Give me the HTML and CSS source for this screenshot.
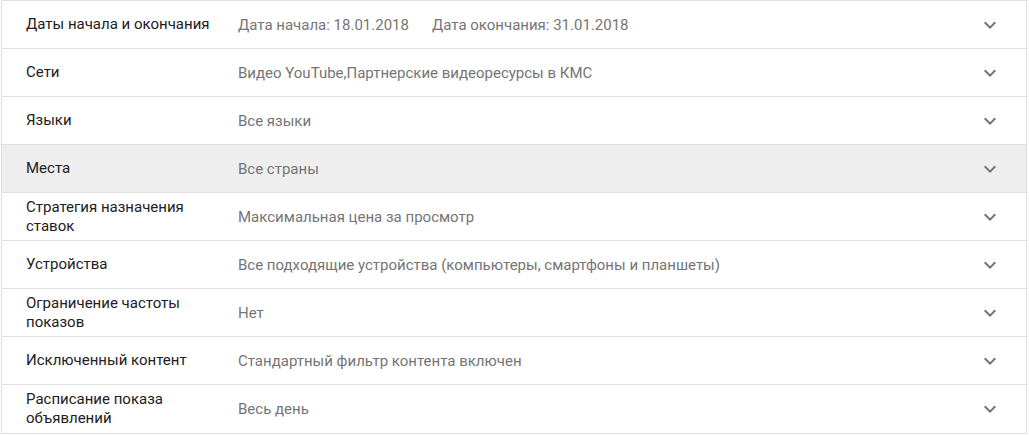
FILE: index.html
```html
<!DOCTYPE html>
<html lang="ru">
<head>
<meta charset="utf-8">
<link rel="stylesheet" href="styles.css">
</head>
<body>
<div class="panel">
  <div class="row">
    <div class="label">Даты начала и окончания</div>
    <div class="value"><span>Дата начала: 18.01.2018</span><span>Дата окончания: 31.01.2018</span></div>
    <svg class="chev" viewBox="0 0 24 24"><path d="M16.59 8.59L12 13.17 7.41 8.59 6 10l6 6 6-6z"/></svg>
  </div>
  <div class="row">
    <div class="label">Сети</div>
    <div class="value">Видео YouTube,Партнерские видеоресурсы в КМС</div>
    <svg class="chev" viewBox="0 0 24 24"><path d="M16.59 8.59L12 13.17 7.41 8.59 6 10l6 6 6-6z"/></svg>
  </div>
  <div class="row">
    <div class="label">Языки</div>
    <div class="value">Все языки</div>
    <svg class="chev" viewBox="0 0 24 24"><path d="M16.59 8.59L12 13.17 7.41 8.59 6 10l6 6 6-6z"/></svg>
  </div>
  <div class="row hover">
    <div class="label">Места</div>
    <div class="value">Все страны</div>
    <svg class="chev" viewBox="0 0 24 24"><path d="M16.59 8.59L12 13.17 7.41 8.59 6 10l6 6 6-6z"/></svg>
  </div>
  <div class="row">
    <div class="label">Стратегия назначения ставок</div>
    <div class="value">Максимальная цена за просмотр</div>
    <svg class="chev" viewBox="0 0 24 24"><path d="M16.59 8.59L12 13.17 7.41 8.59 6 10l6 6 6-6z"/></svg>
  </div>
  <div class="row">
    <div class="label">Устройства</div>
    <div class="value">Все подходящие устройства (компьютеры, смартфоны и планшеты)</div>
    <svg class="chev" viewBox="0 0 24 24"><path d="M16.59 8.59L12 13.17 7.41 8.59 6 10l6 6 6-6z"/></svg>
  </div>
  <div class="row">
    <div class="label">Ограничение частоты показов</div>
    <div class="value">Нет</div>
    <svg class="chev" viewBox="0 0 24 24"><path d="M16.59 8.59L12 13.17 7.41 8.59 6 10l6 6 6-6z"/></svg>
  </div>
  <div class="row">
    <div class="label">Исключенный контент</div>
    <div class="value">Стандартный фильтр контента включен</div>
    <svg class="chev" viewBox="0 0 24 24"><path d="M16.59 8.59L12 13.17 7.41 8.59 6 10l6 6 6-6z"/></svg>
  </div>
  <div class="row">
    <div class="label">Расписание показа объявлений</div>
    <div class="value">Весь день</div>
    <svg class="chev" viewBox="0 0 24 24"><path d="M16.59 8.59L12 13.17 7.41 8.59 6 10l6 6 6-6z"/></svg>
  </div>
</div>
</body>
</html>
```
FILE: styles.css
```css
html, body {
  margin: 0;
  padding: 0;
  background: #ffffff;
}
body {
  font-family: Roboto, "Noto Sans", Arial, sans-serif;
  font-size: 15px;
}
.panel {
  width: 1026px;
  margin-left: 1px;
  border: 1px solid #e0e0e0;
  box-sizing: border-box;
  box-shadow: 0 1px 1px rgba(0,0,0,0.06);
}
.row {
  display: flex;
  align-items: center;
  height: 48px;
  box-sizing: border-box;
  border-bottom: 1px solid #e0e0e0;
  padding: 0 24px 0 24px;
}
.row:last-child {
  border-bottom: none;
}
.row.hover {
  background: #eeeeee;
}
.label {
  width: 188px;
  margin-right: 24px;
  color: #212121;
  line-height: 19px;
}
.value {
  flex: 1;
  color: #757575;
  line-height: 20px;
  display: flex;
  gap: 23px;
}
.chev {
  width: 24px;
  height: 24px;
  fill: #757575;
  flex: none;
}
```
